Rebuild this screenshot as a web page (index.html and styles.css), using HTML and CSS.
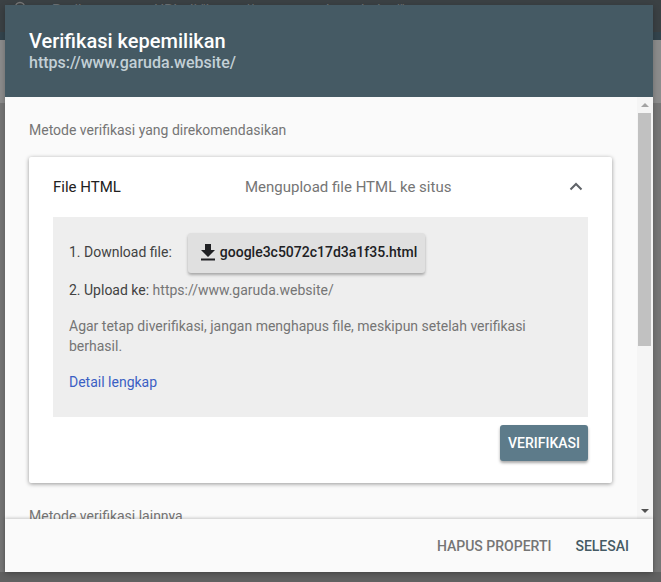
FILE: index.html
```html
<!DOCTYPE html>
<html lang="en">
<head>
    <meta charset="UTF-8">
    <meta name="viewport" content="width=device-width, initial-scale=1.0">
    <title>Verifikasi kepemilikan</title>
    <link rel="stylesheet" href="styles.css">
</head>
<body>

    <!-- Dimmed page behind the dialog -->
    <div class="backdrop">
        <div class="backdrop-bar">
            <svg viewBox="0 0 14 14" aria-hidden="true">
                <circle cx="6" cy="6" r="4.500" fill="none" stroke="#777" stroke-width="1.500"/>
            </svg>
            <span>Periksa semua URL di "https://www.garuda.website/"</span>
        </div>
        <div class="backdrop-strip"></div>
        <div class="backdrop-band"></div>
        <div class="backdrop-page"></div>
        <div class="backdrop-foot"></div>
    </div>

    <div class="dialog" role="dialog" aria-labelledby="dialogTitle">
        <header class="dialog-header">
            <h1 id="dialogTitle">Verifikasi kepemilikan</h1>
            <p>https://www.garuda.website/</p>
        </header>

        <div class="dialog-body">
            <div class="dialog-scroll">
                <p class="section-label">Metode verifikasi yang direkomendasikan</p>

                <section class="method-card">
                    <div class="method-head">
                        <span class="method-name">File HTML</span>
                        <span class="method-desc">Mengupload file HTML ke situs</span>
                        <svg class="chevron" viewBox="0 0 14 9" aria-hidden="true">
                            <path d="M1.500 7.500 7 2l5.500 5.500" fill="none" stroke="#5f6368" stroke-width="2"/>
                        </svg>
                    </div>

                    <div class="method-panel">
                        <div class="download-row">
                            <span class="download-label">1. Download file:</span>
                            <button class="download-btn" type="button">
                                <svg viewBox="0 0 16 18" aria-hidden="true">
                                    <path d="M5 1h6v6h4l-7 7-7-7h4z M1 15.500h14v2H1z" fill="#202124"/>
                                </svg>
                                google3c5072c17d3a1f35.html
                            </button>
                        </div>
                        <p class="upload-row">2. Upload ke: <span class="muted">https://www.garuda.website/</span></p>
                        <p class="note">Agar tetap diverifikasi, jangan menghapus file, meskipun setelah verifikasi berhasil.</p>
                        <a class="details" href="#">Detail lengkap</a>
                    </div>

                    <div class="method-actions">
                        <button class="verify-btn" type="button">VERIFIKASI</button>
                    </div>
                </section>

                <p class="section-label other">Metode verifikasi lainnya</p>
            </div>

            <div class="scrollbar">
                <span class="arrow up"></span>
                <span class="thumb"></span>
                <span class="arrow down"></span>
            </div>
        </div>

        <footer class="dialog-footer">
            <button class="text-btn" type="button">HAPUS PROPERTI</button>
            <button class="text-btn done" type="button">SELESAI</button>
        </footer>
    </div>

</body>
</html>
```

FILE: styles.css
```css
/* Reset and Base Styles */
* {
    margin: 0;
    padding: 0;
    box-sizing: border-box;
}

body {
    width: 661px;
    height: 582px;
    overflow: hidden;
    font-family: Roboto, "Liberation Sans", sans-serif;
    background-color: #666;
    padding: 5px 8px 10px 5px;
}

button {
    font-family: inherit;
    border: none;
    cursor: pointer;
}

/* Backdrop */
.backdrop {
    position: absolute;
    inset: 0;
    display: flex;
    flex-direction: column;
}

.backdrop-bar {
    display: flex;
    align-items: flex-start;
    gap: 24px;
    height: 32px;
    padding: 1px 0 0 14px;
    font-size: 15px;
    color: #6e7376;
    white-space: nowrap;
    background-color: #3b4144;
}

.backdrop-bar svg {
    width: 14px;
    height: 14px;
}

.backdrop-strip {
    height: 8px;
    background-color: #33444d;
}

.backdrop-band {
    height: 63px;
    background-color: #8c8c8c;
}

.backdrop-page {
    flex: 1;
    background-color: #767676;
}

.backdrop-foot {
    height: 10px;
    background-color: #616161;
}

/* Dialog */
.dialog {
    position: relative;
    display: flex;
    flex-direction: column;
    width: 648px;
    height: 567px;
    background-color: #fafafa;
    border-radius: 2px;
    box-shadow: 0 2px 6px rgba(0, 0, 0, 0.25);
}

.dialog-header {
    height: 92px;
    padding: 24px 24px 0;
    background-color: #455a64;
    color: #fff;
}

.dialog-header h1 {
    font-size: 20px;
    line-height: 24px;
    font-weight: 500;
}

.dialog-header p {
    font-size: 16px;
    line-height: 20px;
    font-weight: 500;
    color: #c3d0d6;
}

.dialog-body {
    flex: 1;
    display: flex;
    min-height: 0;
}

.dialog-scroll {
    flex: 1;
    min-width: 0;
    overflow: hidden;
    padding: 24px 25px 0 24px;
}

.section-label {
    font-size: 14px;
    line-height: 18px;
    color: #757575;
}

.section-label.other {
    margin-top: 24px;
}

/* Method card */
.method-card {
    margin-top: 18px;
    height: 326px;
    background-color: #fff;
    border-radius: 2px;
    box-shadow: 0 1px 4px rgba(0, 0, 0, 0.4);
}

.method-head {
    display: flex;
    align-items: center;
    height: 60px;
    padding: 0 29px 0 24px;
}

.method-name {
    width: 192px;
    font-size: 15px;
    color: #212121;
}

.method-desc {
    flex: 1;
    font-size: 15px;
    color: #757575;
}

.chevron {
    width: 14px;
    height: 9px;
    margin-top: -2px;
}

.method-panel {
    height: 200px;
    margin: 0 24px;
    padding: 16px;
    background-color: #eee;
    font-size: 14px;
    color: #5f6368;
}

.download-row {
    display: flex;
    align-items: center;
    gap: 16px;
    color: #424242;
}

.download-label {
    margin-top: -2px;
}

.download-btn {
    display: flex;
    align-items: center;
    gap: 4px;
    height: 40px;
    padding: 0 8px 2px 12px;
    font-size: 14px;
    font-weight: 500;
    color: #202124;
    background-color: #e0e0e0;
    border-radius: 3px;
    box-shadow: 0 2px 3px rgba(0, 0, 0, 0.3);
}

.download-btn svg {
    width: 16px;
    height: 18px;
}

.upload-row {
    margin-top: 8px;
    line-height: 18px;
    color: #424242;
}

.muted {
    color: #757575;
}

.note {
    margin-top: 17px;
    line-height: 20px;
    color: #757575;
}

.details {
    display: block;
    margin-top: 16px;
    line-height: 20px;
    color: #3b5fc4;
    text-decoration: none;
}

.method-actions {
    display: flex;
    justify-content: flex-end;
    padding: 8px 24px 0;
}

.verify-btn {
    width: 88px;
    height: 36px;
    font-size: 14px;
    font-weight: 500;
    color: #fff;
    background-color: #5d7b8a;
    border-radius: 3px;
    box-shadow: 0 2px 3px rgba(0, 0, 0, 0.35);
}

/* Scrollbar */
.scrollbar {
    display: flex;
    flex-direction: column;
    align-items: center;
    width: 16px;
    padding: 0 2px 0 1px;
    background-color: #f5f5f5;
}

.arrow {
    flex: none;
    width: 0;
    height: 0;
    margin: 6px 0;
    border-left: 4px solid transparent;
    border-right: 4px solid transparent;
}

.arrow.up {
    border-bottom: 4px solid #a3a3a3;
}

.arrow.down {
    border-top: 4px solid #505050;
    margin-top: auto;
}

.thumb {
    width: 100%;
    height: 233px;
    background-color: #c1c1c1;
}

/* Footer */
.dialog-footer {
    position: relative;
    display: flex;
    align-items: center;
    justify-content: flex-end;
    gap: 24px;
    height: 53px;
    padding: 0 24px;
    background-color: #fafafa;
    box-shadow: 0 -1px 3px rgba(0, 0, 0, 0.2);
}

.text-btn {
    font-size: 14px;
    font-weight: 500;
    color: #757575;
    background: none;
}

.text-btn.done {
    color: #455a64;
}
```
